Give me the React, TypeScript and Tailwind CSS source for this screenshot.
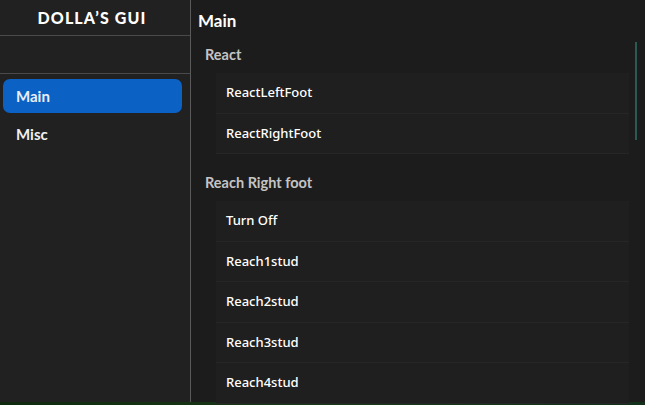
import React from 'react';

const sections = [
  { title: 'React', items: ['ReactLeftFoot', 'ReactRightFoot'] },
  { title: 'Reach Right foot', items: ['Turn Off', 'Reach1stud', 'Reach2stud', 'Reach3stud', 'Reach4stud'] },
];

const App: React.FC = () => {
  return (
    <div className="w-[645px] h-[405px] flex flex-col bg-[#1c1c1c] overflow-hidden font-['Noto_Sans',sans-serif]">
      <div className="flex flex-1 min-h-0">
        {/* Sidebar */}
        <div className="w-[191px] shrink-0 bg-[#212121] border-r border-[#5a5a5a] flex flex-col">
          <div className="h-[36px] border-b border-[#4a4a4a] flex items-center justify-center">
            <span className="text-white font-['Lato',sans-serif] font-black text-[16px] tracking-[1.1px] pt-[1px] pr-[6px]">
              DOLLA’S GUI
            </span>
          </div>
          <div className="h-[38px] border-b border-[#4a4a4a]" />
          <div className="flex flex-col gap-[4px] pt-[5px] pl-[3px] pr-[8px]">
            <div className="h-[34px] rounded-[7px] bg-[#0b62c4] flex items-center pl-[13px] text-[#e8eef8] font-['Lato',sans-serif] font-bold text-[15px]">
              Main
            </div>
            <div className="h-[34px] flex items-center pl-[13px] text-[#f0f0f0] font-['Lato',sans-serif] font-bold text-[15px]">
              Misc
            </div>
          </div>
        </div>

        {/* Content */}
        <div className="flex-1 relative pl-[7px] pr-[16px]">
          <div className="h-[42px] flex items-center text-white font-['Lato',sans-serif] font-bold text-[17px] pb-[1px]">
            Main
          </div>
          {sections.map((s) => (
            <div key={s.title} className="mb-[16px]">
              <div className="h-[31px] pt-[4px] pl-[7px] text-[#c4c4c4] font-['Lato',sans-serif] font-bold text-[14.5px] leading-[18px]">
                {s.title}
              </div>
              <div className="ml-[18px] bg-[#1f1f1f] flex flex-col">
                {s.items.map((it) => (
                  <div
                    key={it}
                    className="h-[40.5px] flex items-center pl-[10px] text-white text-[13px] font-medium border-b border-[#262626]"
                  >
                    {it}
                  </div>
                ))}
              </div>
            </div>
          ))}
          {/* scrollbar */}
          <div className="absolute right-[8px] top-[42px] w-[2px] h-[98px] bg-[#2b5a52]" />
        </div>
      </div>
      <div className="h-[3px] bg-gradient-to-r from-[#0f2a0f] via-[#1a3a18] to-[#12301a]" />
    </div>
  );
};

export default App;
